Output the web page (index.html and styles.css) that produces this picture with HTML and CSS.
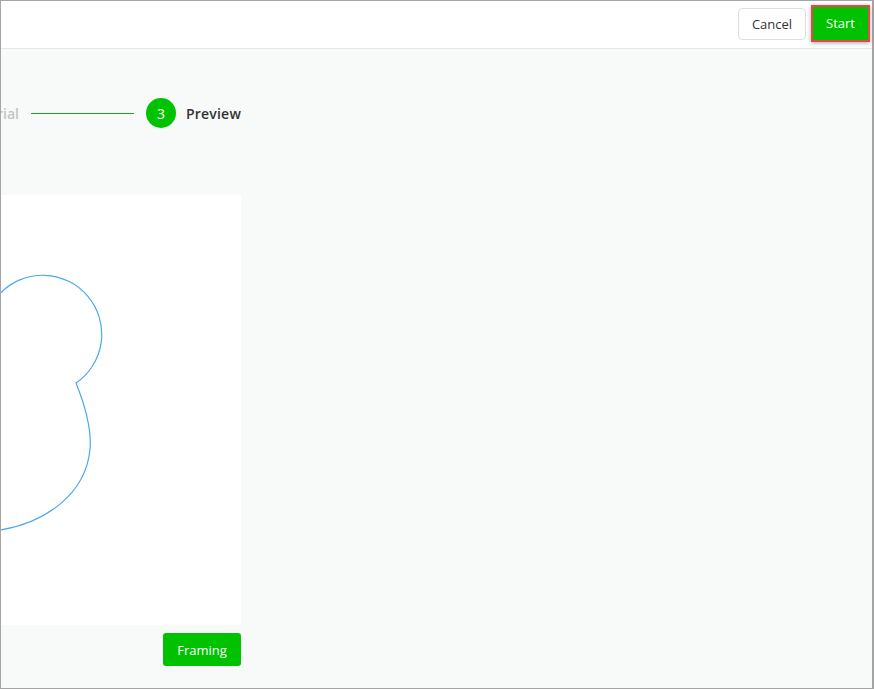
FILE: index.html
```html
<!DOCTYPE html>
<html lang="en">
<head>
    <meta charset="UTF-8">
    <meta name="viewport" content="width=device-width, initial-scale=1.0">
    <title>Preview</title>
    <link rel="stylesheet" href="styles.css">
</head>
<body>
    <div class="frame">
        <div class="top-bar">
            <button class="btn btn-cancel">Cancel</button>
            <button class="btn btn-start">Start</button>
        </div>
        <div class="main">
            <div class="column">
                <div class="steps">
                    <div class="step done">
                        <span class="step-num">2</span>
                        <span class="step-label">Material</span>
                    </div>
                    <div class="step-line"></div>
                    <div class="step active">
                        <span class="step-num">3</span>
                        <span class="step-label">Preview</span>
                    </div>
                </div>
                <div class="preview-panel">
                    <svg class="shape" width="600" height="430" viewBox="-359 0 600 430">
                        <path d="M -60 140 A 59 59 0 0 1 -10 112 L 0 98.6 A 59 59 0 1 1 76 188 C 84 208 92 232 90 254 C 86 300 44 328 0 335 L -40 340"
                              fill="none" stroke="#4aa9ef" stroke-width="1.2"/>
                    </svg>
                </div>
                <div class="panel-actions">
                    <button class="btn btn-framing">Framing</button>
                </div>
            </div>
        </div>
    </div>
</body>
</html>
```

FILE: styles.css
```css
html, body {
    margin: 0;
    padding: 0;
    height: 100%;
}
body {
    font-family: "Open Sans", "Noto Sans", Arial, sans-serif;
    color: #333;
}
.frame {
    height: 100vh;
    box-sizing: border-box;
    border: 1px solid #a4a4a4;
    border-right-width: 2px;
    display: flex;
    flex-direction: column;
    background-color: #f8f9f9;
}
.top-bar {
    height: 47px;
    flex-shrink: 0;
    background-color: #fff;
    border-bottom: 1px solid #e3e8e6;
    display: flex;
    justify-content: flex-end;
    align-items: center;
    gap: 5px;
    padding-right: 2px;
}
.btn {
    font-family: inherit;
    font-size: 13px;
    cursor: pointer;
}
.btn-cancel {
    width: 68px;
    height: 32px;
    background-color: #fff;
    border: 1px solid #dcdfe0;
    border-radius: 4px;
    color: #333;
    margin-top: -2px;
}
.btn-start {
    width: 59px;
    height: 37px;
    background-color: #00c200;
    color: #fff;
    border: 2px solid #e8474a;
    box-shadow: 0 1px 4px rgba(0, 0, 0, 0.35);
    margin-top: -3px;
}
.main {
    flex: 1;
    overflow: hidden;
}
.column {
    width: 600px;
    margin-left: -360px;
}
.steps {
    display: flex;
    justify-content: flex-end;
    align-items: center;
    padding-top: 49px;
    height: 30px;
}
.step {
    display: flex;
    align-items: center;
    gap: 9px;
}
.step.active {
    gap: 10px;
}
.step-num {
    width: 30px;
    height: 30px;
    border-radius: 50%;
    display: flex;
    align-items: center;
    justify-content: center;
    font-size: 14px;
    color: #fff;
    background-color: #00c200;
}
.step-label {
    font-size: 14px;
    font-weight: 600;
}
.step.active .step-label {
    letter-spacing: 0.2px;
}
.step.done .step-label {
    color: #c4c4c4;
}
.step-line {
    width: 103px;
    height: 1px;
    background-color: #1aa51a;
    margin: 0 12px;
}
.preview-panel {
    margin-top: 67px;
    height: 430px;
    background-color: #fff;
    overflow: hidden;
}
.shape {
    display: block;
}
.panel-actions {
    display: flex;
    justify-content: flex-end;
    margin-top: 8px;
}
.btn-framing {
    width: 78px;
    height: 33px;
    background-color: #00c200;
    color: #fff;
    border: none;
    border-radius: 3px;
}
```
